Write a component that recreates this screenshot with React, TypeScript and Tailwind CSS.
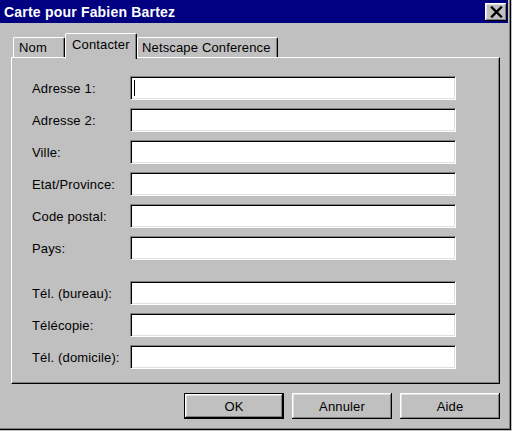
const raised =
  "shadow-[inset_-1px_-1px_#000000,inset_1px_1px_#ffffff,inset_-2px_-2px_#808080,inset_2px_2px_#dfdfdf]";

const rows: { label: string; gap?: boolean; caret?: boolean }[] = [
  { label: "Adresse 1:", caret: true },
  { label: "Adresse 2:" },
  { label: "Ville:" },
  { label: "Etat/Province:" },
  { label: "Code postal:" },
  { label: "Pays:" },
  { label: "Tél. (bureau):", gap: true },
  { label: "Télécopie:" },
  { label: "Tél. (domicile):" },
];

function Field({ caret }: { caret?: boolean }) {
  return (
    <div className="w-[326px] h-[24px] bg-white border-t border-l border-[#808080] border-b border-r border-b-white border-r-white shadow-[inset_1px_1px_#000000,inset_-1px_-1px_#dfdfdf] flex items-start">
      {caret && <span className="ml-[3px] mt-[3px] w-[1px] h-[16px] bg-black" />}
    </div>
  );
}

function Button({ label, isDefault }: { label: string; isDefault?: boolean }) {
  return (
    <div className={`w-[100px] h-[26px] ${isDefault ? "border border-black" : ""}`}>
      <div className={`w-full h-full bg-[#c0c0c0] ${raised} flex items-center justify-center text-[13px] leading-[15px] tracking-[0.15px] text-black`}>
        {label}
      </div>
    </div>
  );
}

export default function App() {
  return (
    <div className="w-[512px] h-[431px] bg-[#c0c0c0] overflow-hidden font-['Liberation_Sans',Arial,sans-serif] text-black">
      <div className="w-[511px] h-[430px] border-r border-b border-black shadow-[inset_-1px_-1px_#808080] flex flex-col">
        {/* title bar */}
        <div className="h-[23px] mr-[2px] bg-[#000080] flex items-center justify-between pl-[4px] pr-[1px]">
          <span className="text-white font-bold text-[14px] leading-[16px] tracking-[0.2px]">Carte pour Fabien Bartez</span>
          <div className={`w-[22px] h-[18px] bg-[#c0c0c0] ${raised} flex items-center justify-center`}>
            <svg width="13" height="12" viewBox="0 0 13 12">
              <path d="M2 1.5 L11 10.5 M11 1.5 L2 10.5" stroke="#000" strokeWidth="2.4" strokeLinecap="square" />
            </svg>
          </div>
        </div>

        <div className="pl-[11px] pt-[10px] flex flex-col">
          {/* tabs */}
          <div className="h-[24px] flex items-end pl-[2px] tracking-[0.15px]">
            <div className="w-[52px] h-[20px] border-t border-l border-white border-r border-r-black rounded-tl-[2px] rounded-tr-[2px] shadow-[inset_-1px_0_#808080] pl-[5px] pt-[2px] text-[13px] leading-[15px]">
              Nom
            </div>
            <div className="relative z-10 w-[72px] h-[26px] -mb-[2px] bg-[#c0c0c0] border-t border-l border-white border-r border-r-black rounded-tl-[2px] rounded-tr-[2px] shadow-[inset_-1px_0_#808080] pl-[6px] pt-[3px] text-[13px] leading-[15px]">
              Contacter
            </div>
            <div className="w-[141px] h-[20px] border-t border-l border-white border-r border-r-black rounded-tl-[2px] rounded-tr-[2px] shadow-[inset_-1px_0_#808080] pl-[4px] pt-[2px] text-[13px] leading-[15px]">
              Netscape Conference
            </div>
          </div>

          {/* panel */}
          <div className="w-[489px] h-[327px] border-t border-l border-white border-r border-b border-r-black border-b-black shadow-[inset_-1px_-1px_#808080] pl-[20px] pt-[18px] flex flex-col gap-[8px]">
            {rows.map((r) => (
              <div key={r.label} className={`h-[24px] flex items-center ${r.gap ? "mt-[13px]" : ""}`}>
                <span className="w-[98px] text-[13px] leading-[15px] tracking-[0.15px]">{r.label}</span>
                <Field caret={r.caret} />
              </div>
            ))}
          </div>

          {/* buttons */}
          <div className="w-[489px] mt-[9px] flex justify-end gap-[8px]">
            <Button label="OK" isDefault />
            <Button label="Annuler" />
            <Button label="Aide" />
          </div>
        </div>
      </div>
    </div>
  );
}
